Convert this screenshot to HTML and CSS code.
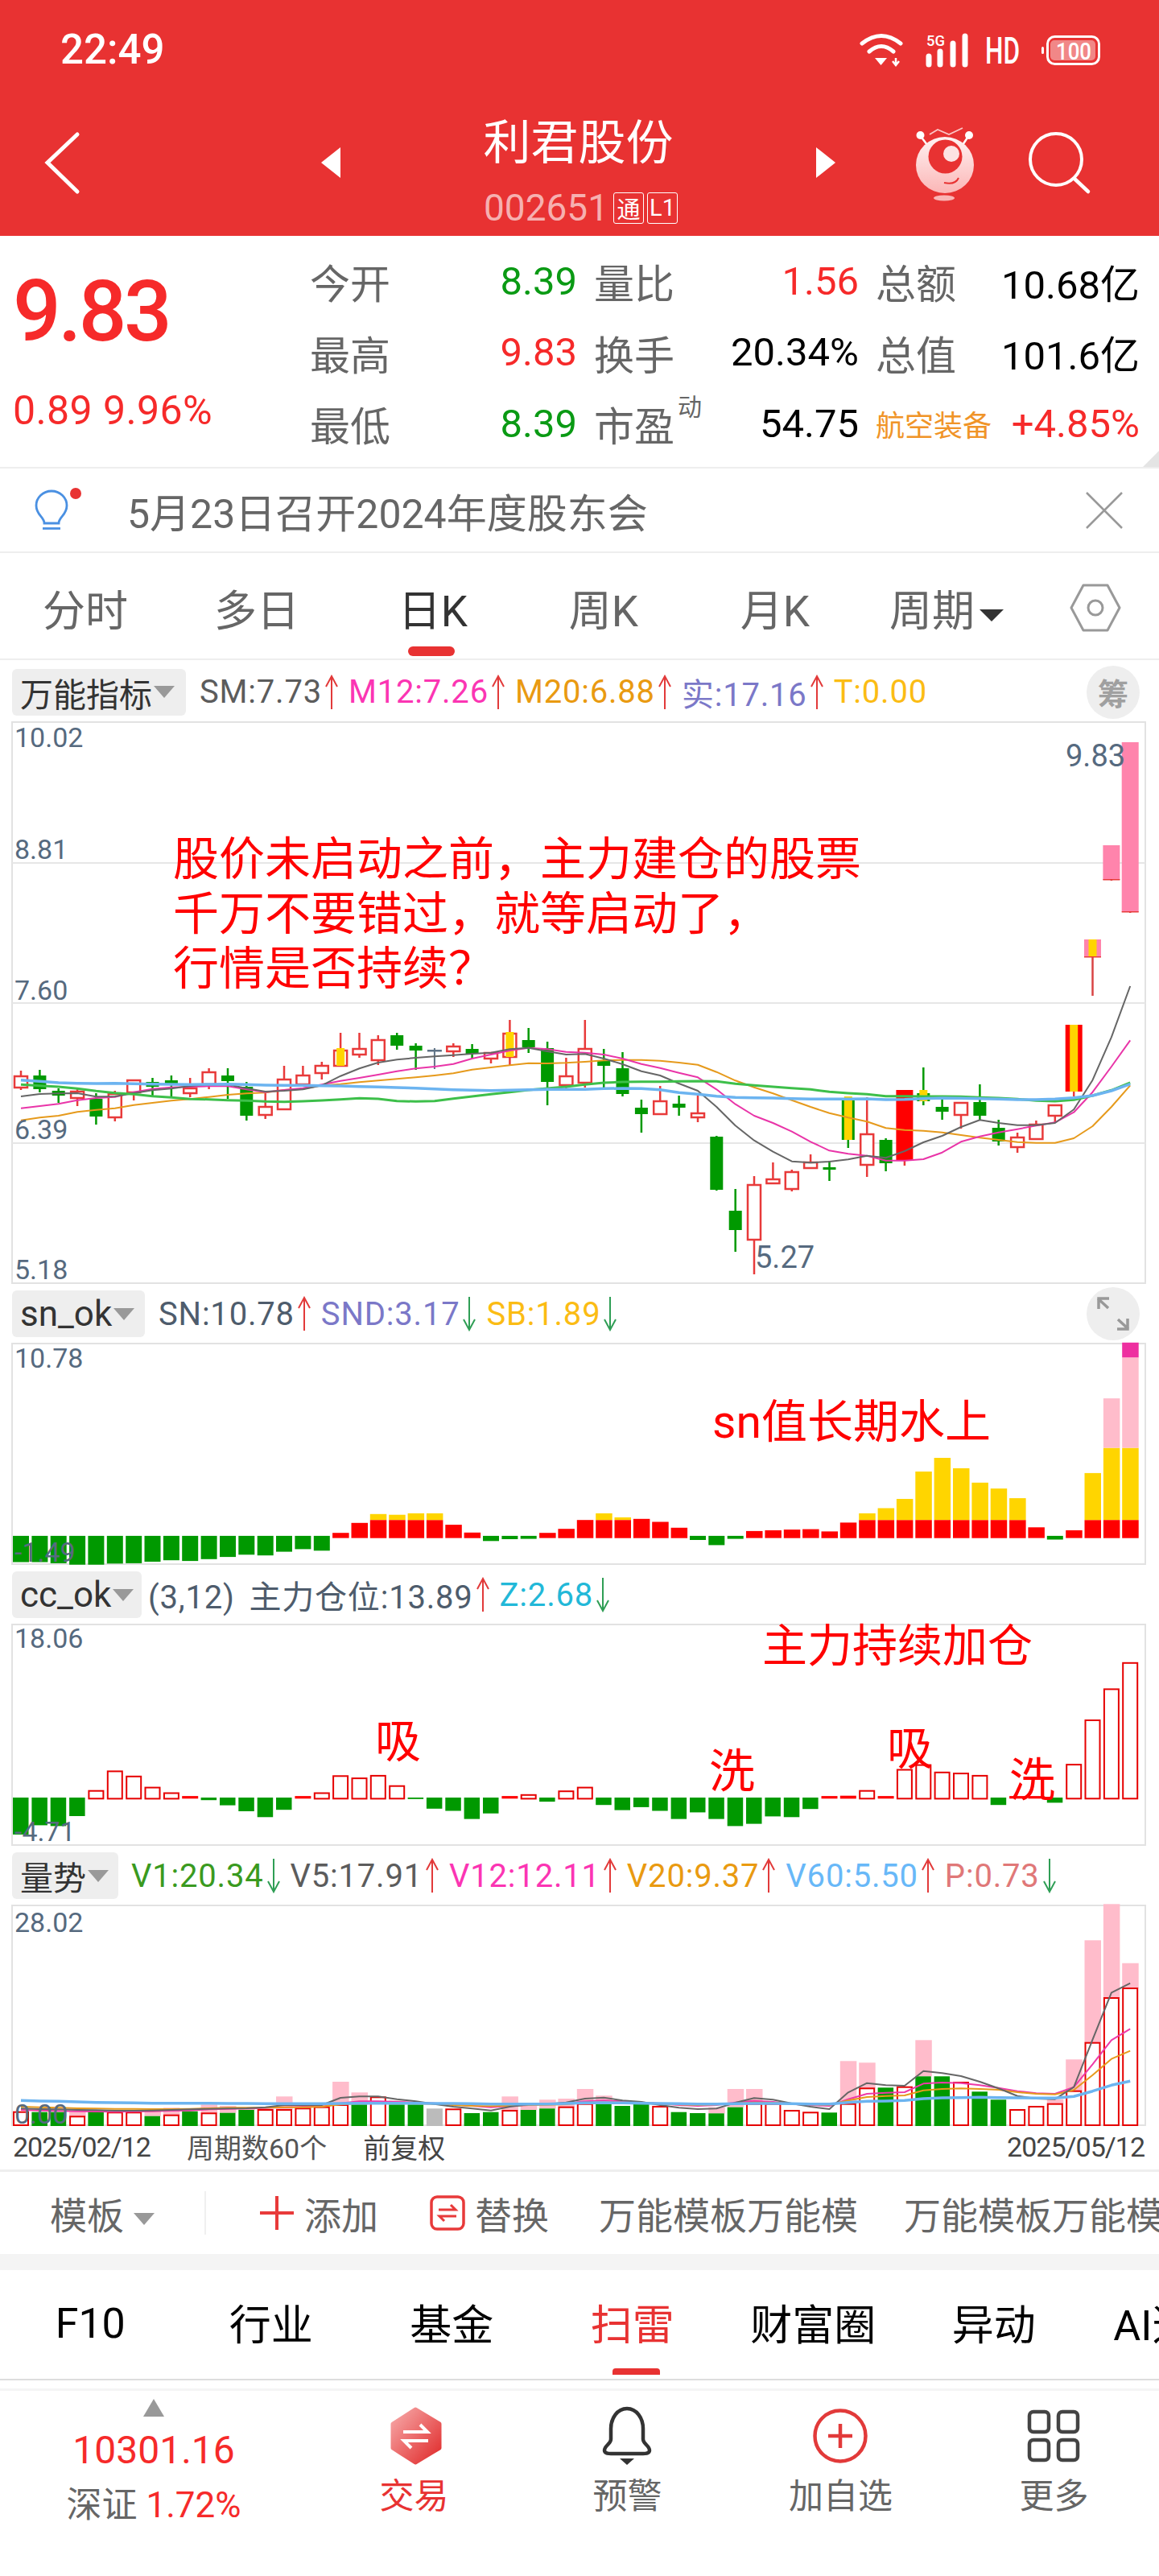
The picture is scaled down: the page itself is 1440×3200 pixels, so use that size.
FILE: index.html
```html
<!DOCTYPE html>
<html lang="zh-CN">
<head>
    <meta charset="UTF-8">
    <meta name="viewport" content="width=device-width, initial-scale=1.0">
    <title>利君股份 002651</title>
    <link rel="stylesheet" href="styles.css">
</head>
<body>
    <svg class="defs" width="0" height="0">
        <symbol id="arrow-up" viewBox="0 0 20 44"><path d="M10 43V2M3 15L10 2L17 15" fill="none" stroke="#e23a3a" stroke-width="2"/></symbol>
        <symbol id="arrow-down" viewBox="0 0 20 44"><path d="M10 1V42M3 29L10 42L17 29" fill="none" stroke="#2f9e55" stroke-width="2"/></symbol>
    </svg>

    <header class="top">
        <div class="status">
            <span class="time">22:49</span>
            <svg class="status-icons" width="310" height="50" viewBox="1060 36 310 50">
                <path d="M1071 53Q1095 34 1119 53M1080 63Q1095 50 1110 63" fill="none" stroke="#fff" stroke-width="5" stroke-linecap="round"/>
                <path d="M1087 71H1102L1094.5 80Z" fill="#fff"/>
                <path d="M1113 71V78M1109 75L1113 80L1117 75" fill="none" stroke="#fff" stroke-width="2.5"/>
                <text x="1151" y="56" class="st-text" font-size="18" textLength="23" lengthAdjust="spacingAndGlyphs">5G</text>
                <path d="M1154 69V79M1168 63V79M1184 53V79M1199 44V79" stroke="#fff" stroke-width="7" stroke-linecap="round"/>
                <text x="1224" y="78" class="st-text" font-size="47" textLength="43" lengthAdjust="spacingAndGlyphs">HD</text>
                <rect x="1294" y="57" width="3" height="9" rx="1.5" fill="#fff"/>
                <rect x="1301.5" y="44.5" width="64" height="34" rx="9" fill="none" stroke="#fff" stroke-width="3"/>
                <rect x="1305" y="49" width="56" height="25" rx="5" fill="#f18787"/>
                <text x="1312" y="73" class="st-text" font-size="29" textLength="44" lengthAdjust="spacingAndGlyphs">100</text>
            </svg>
        </div>
        <nav class="nav">
            <svg class="back" width="60" height="80" viewBox="48 162 60 80">
                <path d="M96 167L59 202L96 238" fill="none" stroke="#fff" stroke-width="5" stroke-linecap="round"/>
            </svg>
            <span class="tri tri-left"></span>
            <div class="nav-center">
                <div class="stock-name">利君股份</div>
                <div class="stock-code">002651<span class="badge">通</span><span class="badge">L1</span></div>
            </div>
            <span class="tri tri-right"></span>
            <svg class="mascot" width="86" height="100" viewBox="1130 150 86 100">
                <defs>
                    <linearGradient id="mascot-fill" x1="0" y1="0" x2="0" y2="1">
                        <stop offset="0" stop-color="#fff2f2"/>
                        <stop offset="1" stop-color="#fbb6b6"/>
                    </linearGradient>
                </defs>
                <path d="M1143 166L1152 178M1204 166L1196 178" stroke="#fff" stroke-width="2.5"/>
                <circle cx="1143.500" cy="166" r="5" fill="#fff"/>
                <circle cx="1204" cy="166" r="5" fill="#fff"/>
                <path d="M1155 165L1165 159L1179 165L1196 157" fill="none" stroke="#fbc6c6" stroke-width="1.800"/>
                <ellipse cx="1174" cy="203" rx="36" ry="35" fill="url(#mascot-fill)"/>
                <circle cx="1174.500" cy="192.500" r="21" fill="#e83232"/>
                <circle cx="1182" cy="189" r="10" fill="#fde3e3"/>
                <path d="M1173 225Q1187 228 1191 219" fill="none" stroke="#e83232" stroke-width="2"/>
                <ellipse cx="1173" cy="244" rx="13" ry="3.500" fill="#f9b5b5"/>
            </svg>
            <svg class="search" width="84" height="84" viewBox="1274 160 84 84">
                <circle cx="1312" cy="198" r="32" fill="none" stroke="#fff" stroke-width="4"/>
                <path d="M1335 222L1352 238" stroke="#fff" stroke-width="4.500" stroke-linecap="round"/>
            </svg>
        </nav>
    </header>

    <section class="quote">
        <div class="quote-price">
            <div class="price">9.83</div>
            <div class="change">0.89 9.96%</div>
        </div>
        <div class="quote-grid">
            <span class="q-label">今开</span><span class="q-val green">8.39</span>
            <span class="q-label q-mid">量比</span><span class="q-val red">1.56</span>
            <span class="q-label q-mid">总额</span><span class="q-val">10.68亿</span>

            <span class="q-label">最高</span><span class="q-val red">9.83</span>
            <span class="q-label q-mid">换手</span><span class="q-val">20.34%</span>
            <span class="q-label q-mid">总值</span><span class="q-val">101.6亿</span>

            <span class="q-label">最低</span><span class="q-val green">8.39</span>
            <span class="q-label q-mid">市盈<sup class="q-sup">动</sup></span><span class="q-val">54.75</span>
            <span class="q-label q-mid q-sector">航空装备</span><span class="q-val red">+4.85%</span>
        </div>
    </section>

    <section class="notice">
        <svg class="bulb" width="64" height="60" viewBox="40 604 64 60">
            <path d="M55 650C55 642 45 640 45 628A19 18 0 0 1 83 628C83 640 73 642 73 650Z" fill="none" stroke="#4a90e2" stroke-width="2.800"/>
            <path d="M53 656.500H75" stroke="#4a90e2" stroke-width="2.800"/>
            <circle cx="94" cy="613" r="7" fill="#e83232"/>
        </svg>
        <span class="notice-text">5月23日召开2024年度股东会</span>
        <svg class="close" width="48" height="48" viewBox="0 0 48 48">
            <path d="M2 2L46 46M46 2L2 46" stroke="#999" stroke-width="2.500"/>
        </svg>
    </section>

    <nav class="tabs">
        <span class="tab">分时</span>
        <span class="tab">多日</span>
        <span class="tab tab-on">日K</span>
        <span class="tab">周K</span>
        <span class="tab">月K</span>
        <span class="tab">周期<i class="caret caret-dark"></i></span>
        <svg class="hex" width="66" height="64" viewBox="0 0 66 64">
            <path d="M18 4H48L63 32L48 60H18L3 32Z" fill="none" stroke="#999" stroke-width="3" stroke-linejoin="round"/>
            <circle cx="33" cy="32" r="9" fill="none" stroke="#999" stroke-width="3"/>
        </svg>
    </nav>

    <div class="pane-head head-1">
        <span class="pill pill-wide">万能指标<i class="caret"></i></span>
        <div class="vals vals-1">
            <span class="v c-gray">SM:7.73</span><svg class="ar"><use href="#arrow-up"/></svg>
            <span class="v c-pink">M12:7.26</span><svg class="ar"><use href="#arrow-up"/></svg>
            <span class="v c-orange">M20:6.88</span><svg class="ar"><use href="#arrow-up"/></svg>
            <span class="v c-purple">实:17.16</span><svg class="ar"><use href="#arrow-up"/></svg>
            <span class="v c-yellow">T:0.00</span>
        </div>
        <span class="round-btn chou">筹</span>
    </div>
    <div class="plot plot-1">
        <svg id="pane-kline" class="pane" width="1440" height="698" viewBox="0 897 1440 698"></svg>
        <span class="ax ax-a">10.02</span>
        <span class="ax ax-b">8.81</span>
        <span class="ax ax-c">7.60</span>
        <span class="ax ax-d">6.39</span>
        <span class="ax ax-e">5.18</span>
        <span class="mark mark-high">9.83</span>
        <span class="mark mark-low">5.27</span>
        <div class="note note-main">股价未启动之前，主力建仓的股票<br>千万不要错过，就等启动了，<br>行情是否持续？</div>
    </div>

    <div class="pane-head head-2">
        <span class="pill pill-sn">sn_ok<i class="caret"></i></span>
        <div class="vals">
            <span class="v c-slate">SN:10.78</span><svg class="ar"><use href="#arrow-up"/></svg>
            <span class="v c-purple">SND:3.17</span><svg class="ar"><use href="#arrow-down"/></svg>
            <span class="v c-yellow">SB:1.89</span><svg class="ar"><use href="#arrow-down"/></svg>
        </div>
        <span class="round-btn">
            <svg width="44" height="44" viewBox="0 0 44 44">
                <path d="M4 16V3H17M3 3L16 15M40 28V41H27M41 41L28 29" fill="none" stroke="#999" stroke-width="3.500"/>
            </svg>
        </span>
    </div>
    <div class="plot plot-2">
        <svg id="pane-sn" class="pane" width="1440" height="275" viewBox="0 1668 1440 275"></svg>
        <span class="ax ax-sn-top">10.78</span>
        <span class="ax ax-sn-low">-1.49</span>
        <div class="note note-sn">sn值长期水上</div>
    </div>

    <div class="pane-head head-3">
        <span class="pill pill-cc">cc_ok<i class="caret"></i></span>
        <div class="vals vals-3">
            <span class="v v-wide c-slate">(3,12) 主力仓位:13.89</span><svg class="ar"><use href="#arrow-up"/></svg>
            <span class="v c-cyan">Z:2.68</span><svg class="ar"><use href="#arrow-down"/></svg>
        </div>
    </div>
    <div class="plot plot-3">
        <svg id="pane-cc" class="pane" width="1440" height="275" viewBox="0 2017 1440 275"></svg>
        <span class="ax ax-cc-top">18.06</span>
        <span class="ax ax-cc-low">-4.71</span>
        <div class="note note-add">主力持续加仓</div>
        <div class="note note-xi-a">吸</div>
        <div class="note note-xi-b">洗</div>
        <div class="note note-xi-c">吸</div>
        <div class="note note-xi-d">洗</div>
    </div>

    <div class="pane-head head-4">
        <span class="pill pill-vol">量势<i class="caret"></i></span>
        <div class="vals vals-4">
            <span class="v c-green">V1:20.34</span><svg class="ar"><use href="#arrow-down"/></svg>
            <span class="v c-gray">V5:17.91</span><svg class="ar"><use href="#arrow-up"/></svg>
            <span class="v c-pink">V12:12.11</span><svg class="ar"><use href="#arrow-up"/></svg>
            <span class="v c-orange">V20:9.37</span><svg class="ar"><use href="#arrow-up"/></svg>
            <span class="v c-sky">V60:5.50</span><svg class="ar"><use href="#arrow-up"/></svg>
            <span class="v c-rose">P:0.73</span><svg class="ar"><use href="#arrow-down"/></svg>
        </div>
    </div>
    <div class="plot plot-4">
        <svg id="pane-vol" class="pane" width="1440" height="274" viewBox="0 2366 1440 274"></svg>
        <span class="ax ax-vol-top">28.02</span>
        <span class="ax ax-vol-low">0.00</span>
    </div>

    <div class="dates">
        <span class="date-num">2025/02/12</span>
        <span class="date-count">周期数60个</span>
        <span>前复权</span>
        <span class="date-num date-last">2025/05/12</span>
    </div>

    <div class="templates">
        <span class="tpl-pick">模板<i class="caret"></i></span>
        <span class="tpl-sep"></span>
        <svg class="tpl-plus" width="44" height="44" viewBox="0 0 44 44">
            <path d="M22 1V43M1 22H43" stroke="#e83a3a" stroke-width="4"/>
        </svg>
        <span class="tpl-add">添加</span>
        <svg class="tpl-swap" width="44" height="44" viewBox="0 0 44 44">
            <rect x="2" y="2" width="40" height="40" rx="7" fill="none" stroke="#e83a3a" stroke-width="3.500"/>
            <path d="M11 18H32L26 12M33 26H12L18 32" fill="none" stroke="#e83a3a" stroke-width="3"/>
        </svg>
        <span class="tpl-replace">替换</span>
        <span class="tpl-name">万能模板万能模</span>
        <span class="tpl-name">万能模板万能模</span>
    </div>

    <div class="band"></div>

    <nav class="sections">
        <span class="section-latin">F10</span>
        <span>行业</span>
        <span>基金</span>
        <span class="section-on">扫雷</span>
        <span>财富圈</span>
        <span>异动</span>
        <span>AI选股</span>
    </nav>

    <footer class="bottom">
        <div class="index-cell">
            <i class="caret-up"></i>
            <div class="index-val">10301.16</div>
            <div class="index-sub">深证 <span class="red">1.72%</span></div>
        </div>
        <div class="cell cell-on">
            <svg width="80" height="76" viewBox="474 2986 80 76">
                <defs>
                    <linearGradient id="trade-fill" x1="0" y1="0" x2="1" y2="1">
                        <stop offset="0" stop-color="#f7aaaa"/>
                        <stop offset="1" stop-color="#e02a2a"/>
                    </linearGradient>
                </defs>
                <path d="M515 2991L545 3009V3039L515 3057L487 3039V3009Z" fill="url(#trade-fill)" stroke="url(#trade-fill)" stroke-width="5" stroke-linejoin="round"/>
                <path d="M500 3019H530L521 3010M531 3030H501L510 3039" fill="none" stroke="#fff" stroke-width="4"/>
            </svg>
            <span>交易</span>
        </div>
        <div class="cell">
            <svg width="80" height="76" viewBox="741 2986 80 76">
                <path d="M780 2990C768 2990 760 3002 760 3015V3028C760 3034 752 3036 752 3042C752 3045 755 3046 760 3046H800C805 3046 808 3045 808 3042C808 3036 800 3034 800 3028V3015C800 3002 792 2990 780 2990Z" fill="none" stroke="#333" stroke-width="4.500" stroke-linejoin="round"/>
                <path d="M771 3052H789L780 3060Z" fill="#333"/>
            </svg>
            <span>预警</span>
        </div>
        <div class="cell">
            <svg width="80" height="76" viewBox="1005 2986 80 76">
                <circle cx="1044" cy="3024" r="31.500" fill="none" stroke="#e23a3a" stroke-width="4.500"/>
                <path d="M1044 3009V3039M1029 3024H1059" stroke="#e23a3a" stroke-width="4.500"/>
            </svg>
            <span>加自选</span>
        </div>
        <div class="cell">
            <svg width="80" height="76" viewBox="1269 2986 80 76">
                <rect x="1278" y="2994" width="24" height="25" rx="5" fill="none" stroke="#444" stroke-width="4.500"/>
                <rect x="1314" y="2994" width="24" height="25" rx="5" fill="none" stroke="#444" stroke-width="4.500"/>
                <rect x="1278" y="3029" width="24" height="25" rx="5" fill="none" stroke="#444" stroke-width="4.500"/>
                <rect x="1314" y="3029" width="24" height="25" rx="5" fill="none" stroke="#444" stroke-width="4.500"/>
            </svg>
            <span>更多</span>
        </div>
    </footer>

    <script src="charts.js"></script>
</body>
</html>
```

FILE: styles.css
```css
* {
    box-sizing: border-box;
}

html, body {
    margin: 0;
    background-color: #fff;
}

body {
    width: 1440px;
    height: 3200px;
    overflow: hidden;
    font-family: Roboto, "Noto Sans CJK SC", sans-serif;
    color: #666;
}

i {
    font-style: normal;
}

.defs {
    position: absolute;
}

.red { color: #f62a2a; }
.green { color: #0a9a14; }

/* red header */
.top {
    height: 293px;
    background-color: #e83232;
    color: #fff;
}

.status {
    display: flex;
    justify-content: space-between;
    align-items: center;
    height: 123px;
    padding: 0 70px 0 75px;
}

.time {
    font-size: 51px;
    font-weight: 500;
}

.st-text {
    fill: #fff;
    font-family: Roboto, sans-serif;
    font-weight: 500;
}

.nav {
    display: flex;
    align-items: center;
    height: 170px;
    padding: 0 0 12px 48px;
}

.tri {
    width: 0;
    height: 0;
    border-top: 19px solid transparent;
    border-bottom: 19px solid transparent;
}

.tri-left {
    margin-left: 291px;
    border-right: 24px solid #fff;
}

.tri-right {
    border-left: 24px solid #fff;
}

.nav-center {
    align-self: flex-start;
    width: 591px;
    margin-top: 25px;
    text-align: center;
}

.stock-name {
    font-size: 59px;
    line-height: 60px;
}

.stock-code {
    display: flex;
    justify-content: center;
    align-items: center;
    height: 48px;
    margin-top: 26px;
    padding-left: 6px;
    font-size: 46px;
    color: #f6b0b0;
}

.badge {
    display: flex;
    justify-content: center;
    align-items: center;
    width: 38px;
    height: 39px;
    margin-left: 6px;
    border: 1.5px solid #fff;
    border-radius: 3px;
    font-size: 29px;
    color: #fff;
}

.badge + .badge {
    margin-left: 4px;
}

.mascot {
    margin-left: 92px;
}

.search {
    margin-left: 58px;
}

/* price block */
.quote {
    position: relative;
    display: flex;
    height: 289px;
    border-bottom: 2px solid #eee;
}

.quote::after {
    content: "";
    position: absolute;
    right: 0;
    bottom: 0;
    border-left: 20px solid transparent;
    border-bottom: 20px solid #e4e4e4;
}

.quote-price {
    width: 385px;
    padding: 45px 0 0 16px;
    color: #f62a2a;
}

.price {
    font-size: 105px;
    line-height: 100px;
    font-weight: 500;
    letter-spacing: -3.5px;
}

.change {
    margin-top: 47px;
    font-size: 50px;
    line-height: 50px;
    letter-spacing: 0.4px;
}

.quote-grid {
    display: grid;
    grid-template-columns: 102px 230px 121px 229px 123px 226px;
    grid-auto-rows: 88.5px;
    align-items: center;
    padding-top: 12px;
    white-space: nowrap;
}

.q-label {
    font-size: 50px;
}

.q-mid {
    padding-left: 21px;
}

.q-val {
    font-size: 49px;
    text-align: right;
    color: #000;
}

.q-val.green { color: #0a9a14; }
.q-val.red { color: #f62a2a; }

.q-sup {
    position: relative;
    top: 16px;
    margin-left: 4px;
    font-size: 30px;
    line-height: 0;
    vertical-align: top;
}

.q-sector {
    font-size: 36px;
    color: #f09428;
}

/* notice */
.notice {
    display: flex;
    align-items: center;
    height: 105px;
    padding: 0 44px 0 40px;
    border-bottom: 2px solid #eee;
}

.notice-text {
    flex: 1;
    margin-left: 54px;
    font-size: 50px;
}

/* period tabs */
.tabs {
    display: grid;
    grid-template-columns: 212px 214px 224px 200px 226px 200px 1fr;
    align-items: center;
    height: 133px;
    padding-top: 5px;
    border-bottom: 2px solid #eee;
    font-size: 53px;
}

.tab {
    position: relative;
    text-align: center;
}

.tab-on {
    color: #333;
}

.tab-on::after {
    content: "";
    position: absolute;
    left: 81px;
    top: 86px;
    width: 58px;
    height: 12px;
    border-radius: 6px;
    background-color: #e83232;
}

.hex {
    margin-left: 52px;
}

.caret {
    display: inline-block;
    width: 0;
    height: 0;
    margin-left: 2px;
    border-left: 13px solid transparent;
    border-right: 13px solid transparent;
    border-top: 15px solid #999;
    vertical-align: middle;
}

.caret-dark {
    margin-left: 6px;
    border-left-width: 15px;
    border-right-width: 15px;
    border-top-color: #333;
}

/* chart panes */
.pane-head {
    display: flex;
    align-items: center;
    height: 74px;
    padding: 0 24px 0 15px;
}

.head-1 {
    height: 77px;
    padding-top: 2px;
}

.pill {
    display: flex;
    flex-shrink: 0;
    align-items: center;
    height: 58px;
    padding-left: 10px;
    border-radius: 6px;
    background-color: #eee;
    font-size: 41px;
    color: #333;
}

.pill-wide { width: 216px; }
.pill-vol { width: 132px; }

.pill-sn {
    width: 165px;
    font-size: 44px;
}

.pill-cc {
    width: 161px;
    font-size: 44px;
}

.vals {
    display: flex;
    flex: 1;
    align-items: center;
    margin-left: 17px;
}

.vals-3 {
    margin-left: 8px;
}

.vals-4 {
    margin-left: 16px;
}

.v {
    font-size: 40px;
    letter-spacing: 0.8px;
    white-space: nowrap;
}

.v-wide {
    word-spacing: 7px;
}

.ar {
    width: 20px;
    height: 44px;
    margin: 0 11px 0 2px;
}

.c-gray { color: #5c5c5c; }
.c-slate { color: #4e5c6c; }
.c-pink { color: #fb35b3; }
.c-orange { color: #e99a11; }
.c-purple { color: #7b78c8; }
.c-yellow { color: #fbbc14; }
.c-cyan { color: #22b8d8; }
.c-green { color: #3a9a20; }
.c-sky { color: #68b8f8; }
.c-rose { color: #e07878; }

.round-btn {
    display: flex;
    justify-content: center;
    align-items: center;
    width: 66px;
    height: 66px;
    border-radius: 50%;
    background-color: #eee;
}

.chou {
    font-size: 38px;
    font-weight: 700;
    color: #a0a0a0;
}

.plot {
    position: relative;
    width: 1440px;
}

.plot-1 { height: 698px; }
.plot-2 { height: 275px; }
.plot-3 { height: 275px; }
.plot-4 { height: 274px; }

.pane {
    display: block;
    overflow: visible;
}

.ax, .mark {
    position: absolute;
    left: 18px;
    font-size: 34px;
    line-height: 34px;
    color: #566a7f;
}

.ax-a { top: 2px; }
.ax-b { top: 141px; }
.ax-c { top: 316px; }
.ax-d { top: 489px; }
.ax-e { top: 663px; }
.ax-sn-top { top: 1px; }
.ax-sn-low { top: 242px; }
.ax-cc-top { top: 0; }
.ax-cc-low { top: 240px; }
.ax-vol-top { top: 4px; }
.ax-vol-low { top: 242px; }

.mark {
    font-size: 38px;
}

.mark-high { left: 1324px; top: 25px; }
.mark-low { left: 938px; top: 648px; }

.note {
    position: absolute;
    font-size: 57px;
    line-height: 68px;
    color: #f00;
    white-space: nowrap;
}

.note-main { left: 215px; top: 137px; }
.note-sn { left: 885px; top: 64px; }
.note-add { left: 947px; top: -7px; font-size: 56px; }
.note-xi-a { left: 466px; top: 112px; }
.note-xi-b { left: 881px; top: 149px; }
.note-xi-c { left: 1102px; top: 121px; }
.note-xi-d { left: 1254px; top: 160px; }

/* date row */
.dates {
    display: flex;
    align-items: center;
    height: 57px;
    padding: 0 18px 3px 16px;
    border-bottom: 3px solid #eee;
    font-size: 34px;
    color: #444;
}

.dates span {
    white-space: nowrap;
}

.date-num {
    letter-spacing: -1px;
}

.date-count {
    margin: 0 45px;
    color: #555;
}

.date-last {
    margin-left: auto;
}

/* template row */
.templates {
    display: flex;
    align-items: center;
    height: 102px;
    padding-left: 62px;
    font-size: 46px;
    white-space: nowrap;
}

.templates > * {
    flex-shrink: 0;
}

.tpl-pick .caret {
    margin-left: 12px;
}

.tpl-sep {
    width: 2px;
    height: 54px;
    margin-left: 62px;
    background-color: #f0f0f0;
}

.tpl-plus { margin-left: 66px; }
.tpl-add { margin-left: 12px; }
.tpl-swap { margin-left: 64px; }
.tpl-replace { margin-left: 12px; }
.tpl-name { margin-left: 62px; }
.tpl-name + .tpl-name { margin-left: 57px; }

.band {
    height: 20px;
    background-color: #f4f4f4;
}

/* section tabs */
.sections {
    display: grid;
    grid-template-columns: repeat(7, 224.5px);
    align-items: center;
    height: 137px;
    padding-bottom: 6px;
    border-bottom: 2px solid #ddd;
    font-size: 52px;
    color: #000;
    text-align: center;
    white-space: nowrap;
}

.section-latin {
    padding-top: 4px;
}

.section-on {
    position: relative;
    color: #e83232;
}

.section-on::after {
    content: "";
    position: absolute;
    left: 87px;
    top: 95px;
    width: 59px;
    height: 8px;
    border-radius: 4px 4px 0 0;
    background-color: #e83232;
}

/* bottom nav */
.bottom {
    display: grid;
    grid-template-columns: 382px repeat(4, 265px);
    height: 245px;
    padding-top: 10px;
    border-top: 3px solid #f5f5f5;
    margin-top: 10px;
    text-align: center;
}

.caret-up {
    display: block;
    width: 0;
    height: 0;
    margin: 0 auto;
    border-left: 13px solid transparent;
    border-right: 13px solid transparent;
    border-bottom: 22px solid #999;
}

.index-val {
    margin-top: 17px;
    font-size: 48px;
    line-height: 50px;
    color: #f62a2a;
}

.index-sub {
    margin-top: 18px;
    font-size: 44px;
    line-height: 50px;
}

.cell {
    padding-top: 8px;
    font-size: 43px;
    line-height: 50px;
}

.cell svg {
    display: block;
    margin: 0 auto 12px;
}

.cell-on {
    color: #e83232;
}
```

FILE: charts.js
```js
// bar centres, 60 sessions across the plot
const barX = i => 26 + 23.36 * i;

const RED = '#e83a3a';
const GREEN = '#009900';
const YELLOW = '#ffd500';
const PINK = '#ff84ac';
const PALE = '#ffbccb';

function rect(x, y, w, h, fill) {
    return `<rect x="${x.toFixed(1)}" y="${y.toFixed(1)}" width="${w}" height="${h.toFixed(1)}" fill="${fill}"/>`;
}

function hollow(x, y, w, h, stroke, sw) {
    return `<rect x="${x.toFixed(1)}" y="${y.toFixed(1)}" width="${w}" height="${h.toFixed(1)}" fill="#fff" stroke="${stroke}" stroke-width="${sw}"/>`;
}

function vline(x, y1, y2, stroke, sw) {
    return `<path d="M${x.toFixed(1)} ${y1}V${y2}" stroke="${stroke}" stroke-width="${sw}"/>`;
}

function polyline(ys, stroke, sw) {
    const pts = ys.map((y, i) => barX(i).toFixed(1) + ',' + y.toFixed(1)).join(' ');
    return `<polyline points="${pts}" fill="none" stroke="${stroke}" stroke-width="${sw}" stroke-linejoin="round"/>`;
}

function frame(top, height, grid) {
    let s = `<rect x="15" y="${top}" width="1408" height="${height - 1}" fill="none" stroke="#e2e2e2" stroke-width="2"/>`;
    (grid || []).forEach(y => {
        s += `<path d="M15 ${y}H1423" stroke="#e6e6e6" stroke-width="2"/>`;
    });
    return s;
}

// kind, body top, body bottom, wick top, wick bottom
const CANDLES = [
    ['r',1337,1351,1330,1354], ['g',1336,1353,1329,1357], ['g',1355,1361,1352,1370], ['r',1356,1364,1352,1374],
    ['g',1365,1387,1358,1397], ['r',1359,1388,1355,1393], ['r',1342,1357,1342,1367], ['g',1344,1350,1339,1363],
    ['g',1342,1347,1336,1362], ['r',1352,1358,1339,1363], ['r',1332,1347,1327,1353], ['g',1336,1343,1327,1365],
    ['g',1350,1386,1344,1392], ['r',1375,1385,1355,1390], ['r',1341,1378,1324,1378], ['r',1336,1347,1324,1347],
    ['r',1324,1333,1319,1341], ['ry',1305,1324,1283,1324,1302], ['r',1303,1310,1283,1314], ['r',1292,1317,1286,1323],
    ['g',1286,1299,1283,1304], ['g',1299,1305,1296,1329], ['n',1305,1305,1302,1328], ['r',1300,1306,1296,1313],
    ['g',1303,1309,1297,1315], ['r',1308,1315,1307,1321], ['ry',1284,1313,1267,1323,1282], ['g',1292,1301,1277,1308],
    ['g',1302,1344,1294,1373], ['r',1337,1348,1314,1352], ['r',1303,1345,1267,1351], ['g',1317,1324,1303,1351],
    ['g',1327,1359,1307,1362], ['g',1376,1384,1366,1407], ['r',1368,1384,1349,1384], ['g',1371,1376,1361,1386],
    ['r',1383,1388,1361,1394], ['g',1412,1478,1411,1479], ['g',1504,1528,1477,1555], ['r',1472,1540,1461,1583],
    ['r',1465,1470,1444,1471], ['r',1456,1477,1453,1480], ['r',1444,1451,1434,1451], ['g',1450,1453,1442,1467],
    ['gy',1367,1416,1362,1426,1362], ['r',1409,1447,1363,1462], ['g',1416,1445,1414,1455], ['R',1354,1442,1354,1448],
    ['gy',1358,1368,1326,1373,1354], ['g',1375,1381,1361,1391], ['r',1370,1385,1370,1402], ['g',1369,1386,1347,1392],
    ['g',1401,1418,1391,1423], ['r',1413,1425,1407,1432], ['r',1397,1415,1392,1415], ['r',1373,1386,1373,1395],
    ['Ry',1273,1356,1273,1362,1273], ['py',1167,1189,1167,1237,1167], ['p',1050,1093,1050,1094], ['p',922,1133,922,1134]
];

function candle(c, i) {
    const [kind, top, bottom, wickTop, wickBottom, fillTop] = c;
    const x = barX(i);
    let s = '';
    if (kind === 'g' || kind === 'gy') {
        s += vline(x, wickTop, wickBottom, GREEN, 2.5);
        s += rect(x - 8, top, 16, bottom - top, GREEN);
        if (kind === 'gy') s += rect(x - 5, fillTop, 10, bottom - fillTop, YELLOW);
    } else if (kind === 'n') {
        s += vline(x, wickTop, wickBottom, '#5f7386', 2);
        s += rect(x - 9, top - 1, 18, 2.5, '#5f7386');
    } else if (kind === 'R' || kind === 'Ry') {
        s += vline(x, wickTop, wickBottom, RED, 2.5);
        s += rect(x - 10.5, top, 21, bottom - top, '#f00');
        if (kind === 'Ry') s += rect(x - 5, fillTop, 10, bottom - fillTop, YELLOW);
    } else if (kind === 'p' || kind === 'py') {
        s += vline(x, wickTop, wickBottom, '#d84444', 2.5);
        s += rect(x - 10.5, top, 21, bottom - top, PINK);
        if (kind === 'py') s += rect(x - 5, fillTop, 10, bottom - fillTop, YELLOW);
        s += rect(x - 10.5, bottom - 1, 21, 1.5, RED);
    } else {
        s += vline(x, wickTop, wickBottom, RED, 2.5);
        s += hollow(x - 8, top, 16, bottom - top, RED, 2.5);
        if (kind === 'ry') s += rect(x - 5, fillTop, 10, bottom - fillTop, YELLOW);
    }
    return s;
}

// traced values: left half was read from one crop, right half from another
const trace = (left, right) => [...left.map(z => 1240 + z / 3), ...right.map(z => 1260 + z / 3)];

const KLINE_LINES = [
    [trace(
        [305,310,315,317,318,317,319,320,321,322,321,320,322,324,325,325,326,327,329,331,333,335,338,341,343,344,343,341,340,340],
        [280,277,276,277,281,292,298,305,310,311,312,314,316,316,316,315,318,317,314,312,313,314,316,318,318,316,311,303,285,260]
    ), '#6cb4f0', 3.5],
    [trace(
        [322,326,330,337,346,353,358,365,370,376,377,380,382,385,386,384,381,377,373,375,383,385,383,374,366,358,350,342,336,330],
        [262,255,252,251,251,250,249,250,259,265,270,275,280,289,294,298,305,305,306,306,307,310,312,316,322,324,319,303,283,255]
    ), '#3dbf4a', 3],
    [trace(
        [455,445,438,424,416,410,398,390,382,376,368,360,355,352,342,338,325,320,313,307,301,295,288,280,266,258,250,242,243,241],
        [177,172,170,170,173,180,188,215,247,272,295,320,345,368,385,400,424,431,434,440,450,460,468,476,479,479,462,417,345,265]
    ), '#e69a1c', 2],
    [trace(
        [410,402,394,380,372,368,350,338,332,330,328,328,340,350,342,335,322,308,297,285,272,262,255,245,225,210,195,185,190,200],
        [143,150,165,185,200,218,235,280,335,378,405,437,475,508,520,527,545,545,540,515,475,455,440,428,415,403,365,290,195,97]
    ), '#e935a8', 2],
    [trace(
        [366,357,355,354,367,366,354,343,337,327,322,322,336,348,345,340,325,290,262,240,229,222,217,212,207,203,190,185,198,210],
        [148,165,186,212,228,258,285,345,415,470,512,548,553,549,541,527,535,510,477,453,420,394,405,413,413,405,355,245,85,-105]
    ), '#666', 2]
];

function drawKline() {
    let s = frame(897, 698, [1072, 1246, 1420]);
    // the last line ends above the others, blue goes over green
    s += CANDLES.map(candle).join('');
    [KLINE_LINES[2], KLINE_LINES[3], KLINE_LINES[4], KLINE_LINES[1], KLINE_LINES[0]].forEach(l => {
        s += polyline(l[0], l[1], l[2]);
    });
    document.getElementById('pane-kline').innerHTML = s;
}

// one entry per bar: negative-style [ 'g', bottom ] or stacked tops
const SN_BARS = [
    ['g',783],['g',783],['g',786],['g',790],['g',790],['g',787],['g',786],['g',782],['g',778],['g',780],
    ['g',775],['g',769],['g',763],['g',765],['g',755],['g',748],['g',752],['r',704],['r',677],['r',669,653],
    ['r',669,655],['r',669,651],['r',669,651],['r',682],['r',703],['g',726],['g',721],['g',720],['r',704],['r',693],
    ['r',669],['r',669,651],['r',669,662],['r',666],['r',674],['r',690],['g',723],['g',737],['g',720],['r',699],
    ['r',697],['r',695],['r',694],['r',700],['r',676],['r',669,651],['r',669,637],['r',669,612],['r',669,538],['r',669,501],
    ['r',669,529],['r',669,568],['r',669,584],['r',669,610],['r',689],['g',722],['r',697],['r',669,542],['r',669,474,340],['r',669,474,229,189]
];

function drawSn() {
    const y = z => 1580 + z / 2.178;
    let s = frame(1668, 275);
    SN_BARS.forEach((b, i) => {
        const x = barX(i) - 10;
        if (b[0] === 'g') {
            s += rect(x, y(712), 20, y(b[1]) - y(712), GREEN);
            return;
        }
        s += rect(x, y(b[1]), 20.5, y(718) - y(b[1]), '#f00');
        if (b[2]) s += rect(x, y(b[2]), 20.5, y(b[1]) - y(b[2]), YELLOW);
        if (b[3]) s += rect(x, y(b[3]), 20.5, y(b[2]) - y(b[3]), PALE);
        if (b[4]) s += rect(x, y(b[4]), 20.5, y(b[3]) - y(b[4]), '#ee30a0');
    });
    document.getElementById('pane-sn').innerHTML = s;
}

const CC_BARS = [
    ['g',1520],['g',1495],['g',1497],['g',1470],['r',1402],['r',1349],['r',1363],['r',1393],['r',1408],['t',1416],
    ['g',1427],['g',1441],['g',1457],['g',1473],['g',1453],['t',1416],['r',1408],['r',1362],['r',1368],['r',1361],
    ['r',1389],['g',1424],['g',1450],['g',1456],['g',1478],['g',1463],['t',1416],['r',1413],['g',1431],['r',1403],
    ['r',1393],['g',1440],['g',1454],['g',1446],['g',1456],['g',1478],['g',1460],['g',1478],['g',1497],['g',1491],
    ['g',1471],['g',1473],['g',1451],['t',1416],['t',1415],['r',1402],['t',1416],['r',1345],['r',1332],['r',1352],
    ['r',1355],['r',1361],['g',1440],['t',1416],['t',1416],['g',1434],['r',1331],['r',1211],['r',1127],['r',1056]
];

function drawCc() {
    const y = z => 1580 + z / 2.178;
    let s = frame(2017, 275);
    CC_BARS.forEach((b, i) => {
        const x = barX(i) - 10;
        if (b[0] === 'g') s += rect(x, y(1420), 19.5, y(b[1]) - y(1420), GREEN);
        else if (b[0] === 't') s += rect(x, y(b[1]), 20, y(1423) - y(b[1]), '#f00');
        else s += hollow(x + 1, y(b[1]), 18, y(1423) - y(b[1]), '#e60000', 2);
    });
    document.getElementById('pane-cc').innerHTML = s;
}

// kind, bar top, optional top of the pale bar behind it
const VOL_BARS = [
    ['r',998],['g',998],['g',998],['r',1015,995],['g',995],['r',1000],['r',1000],['g',1013,995],['r',1010,982],['g',995],
    ['r',1003,970],['g',1001,975],['g',990,980],['r',990],['r',990,940],['r',985],['r',980],['r',972,885],['g',970,925],['r',943],
    ['g',970,955],['g',970],['n',985],['r',988],['g',1002],['g',998],['r',993,940],['g',990,975],['g',985,952],['r',980,948],
    ['r',968,912],['g',968,937],['g',975],['g',968],['r',978],['g',998],['g',1002],['g',1003,980],['g',980,912],['r',968,912],
    ['r',968],['r',993],['r',1000],['g',1000],['r',968,808],['r',910,814],['g',907],['r',905],['g',865,730],['g',865],
    ['r',888],['g',922],['g',952],['r',990],['r',978],['r',968,950],['r',920,802],['r',740,358],['r',573,223],['r',537,443]
];

const VOL_LINES = [
    [[990,992,994,995,996,997,996,995,993,992,988,986,985,983,980,978,978,965,958,958,960,962,965,970,975,980,975,972,970,966,
      958,955,958,962,966,972,975,972,962,956,960,968,972,975,950,930,926,924,892,888,890,898,908,920,928,930,905,820,730,688], '#ee3aa8', 2],
    [[978,980,982,984,985,986,986,987,987,986,984,982,982,982,980,980,978,970,965,964,965,966,968,972,975,976,974,972,971,969,
      962,962,962,964,967,970,972,970,966,962,963,967,970,971,955,942,938,936,917,912,910,912,915,924,930,932,916,860,800,770], '#e69a1c', 2],
    [[985,987,988,990,991,993,993,992,990,988,986,985,984,980,972,972,972,945,940,940,950,958,968,978,985,992,978,970,968,962,
      948,944,955,960,972,982,987,985,963,946,952,966,978,987,925,890,898,900,845,853,864,885,910,938,948,950,905,728,553,518], '#666', 2],
    [[955,957,958,960,962,963,964,965,965,965,965,966,966,967,967,967,967,966,965,965,965,965,966,966,967,968,968,968,968,966,
      964,963,964,965,966,967,968,968,967,966,966,967,968,968,962,958,957,955,948,945,944,943,944,945,946,946,940,920,898,883], '#6cb4f0', 3.5]
];

function drawVol() {
    const y = z => 2290 + z / 3;
    const base = y(1050);
    let s = frame(2366, 274);
    VOL_BARS.forEach((b, i) => {
        const x = barX(i) - 10;
        if (b[2]) s += rect(x, y(b[2]), 20.5, y(b[1]) - y(b[2]), PALE);
        if (b[0] === 'g') s += rect(x, y(b[1]), 19.5, base - y(b[1]), GREEN);
        else if (b[0] === 'n') s += rect(x, y(b[1]), 20, base - y(b[1]), '#bbb');
        else s += hollow(x + 1, y(b[1]), 18, base - y(b[1]) - 1, '#e60000', 2);
    });
    VOL_LINES.forEach(l => {
        s += polyline(l[0].map(y), l[1], l[2]);
    });
    document.getElementById('pane-vol').innerHTML = s;
}

drawKline();
drawSn();
drawCc();
drawVol();
```
